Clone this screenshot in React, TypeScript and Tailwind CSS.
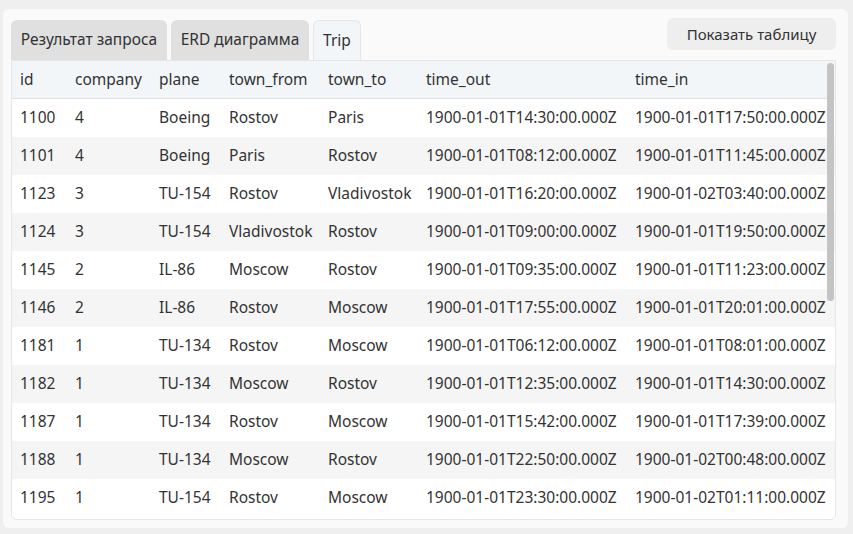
import React from "react";

const rows = [
  ["1100", "4", "Boeing", "Rostov", "Paris", "1900-01-01T14:30:00.000Z", "1900-01-01T17:50:00.000Z"],
  ["1101", "4", "Boeing", "Paris", "Rostov", "1900-01-01T08:12:00.000Z", "1900-01-01T11:45:00.000Z"],
  ["1123", "3", "TU-154", "Rostov", "Vladivostok", "1900-01-01T16:20:00.000Z", "1900-01-02T03:40:00.000Z"],
  ["1124", "3", "TU-154", "Vladivostok", "Rostov", "1900-01-01T09:00:00.000Z", "1900-01-01T19:50:00.000Z"],
  ["1145", "2", "IL-86", "Moscow", "Rostov", "1900-01-01T09:35:00.000Z", "1900-01-01T11:23:00.000Z"],
  ["1146", "2", "IL-86", "Rostov", "Moscow", "1900-01-01T17:55:00.000Z", "1900-01-01T20:01:00.000Z"],
  ["1181", "1", "TU-134", "Rostov", "Moscow", "1900-01-01T06:12:00.000Z", "1900-01-01T08:01:00.000Z"],
  ["1182", "1", "TU-134", "Moscow", "Rostov", "1900-01-01T12:35:00.000Z", "1900-01-01T14:30:00.000Z"],
  ["1187", "1", "TU-134", "Rostov", "Moscow", "1900-01-01T15:42:00.000Z", "1900-01-01T17:39:00.000Z"],
  ["1188", "1", "TU-134", "Moscow", "Rostov", "1900-01-01T22:50:00.000Z", "1900-01-02T00:48:00.000Z"],
  ["1195", "1", "TU-154", "Rostov", "Moscow", "1900-01-01T23:30:00.000Z", "1900-01-02T01:11:00.000Z"],
];

const headers = ["id", "company", "plane", "town_from", "town_to", "time_out", "time_in"];
const widths = ["w-[55px]", "w-[84px]", "w-[70px]", "w-[99px]", "w-[98px]", "w-[209px]", "flex-1"];

export default function App() {
  return (
    <div
      className="w-[853px] h-[534px] bg-[#efefef] pt-[9px] pl-[3px] overflow-hidden text-[#333333]"
      style={{ fontFamily: '"Noto Sans", sans-serif' }}
    >
      <div className="w-[845px] h-[519px] bg-[#fafafa] rounded-[6px] pl-[8px] pr-[12px] pt-[11px]">
        <div className="flex items-end justify-between">
          <div className="flex gap-[4px] items-end">
            <div className="h-[40px] w-[156px] flex items-center justify-center bg-[#e0e0e0] rounded-t-[6px] text-[15.5px] whitespace-nowrap">Результат запроса</div>
            <div className="h-[40px] w-[138px] flex items-center justify-center bg-[#e0e0e0] rounded-t-[6px] text-[15.5px] whitespace-nowrap">ERD диаграмма</div>
            <div className="h-[40px] w-[48px] flex items-center justify-center bg-[#f2f6f9] border border-b-0 border-[#e3e7ea] rounded-t-[6px] text-[15.5px]">Trip</div>
          </div>
          <div className="self-start -mt-[2px] h-[32px] w-[169px] flex items-center justify-center bg-[#eeeeee] rounded-[6px] text-[15px]">
            Показать таблицу
          </div>
        </div>
        <div className="relative h-[460px] border border-[#e6e6e6] rounded-b-[6px] overflow-hidden bg-white">
          <div className="flex h-[38px] items-center bg-[#f2f6f9] border-b border-[#dde1e4] text-[15.5px]">
            {headers.map((h, i) => (
              <div key={h} className={`${widths[i]} pl-[8px]`}>{h}</div>
            ))}
          </div>
          {rows.map((r, ri) => (
            <div
              key={r[0]}
              className={`flex h-[38px] items-center text-[15.5px] ${ri % 2 === 1 ? "bg-[#f5f5f5]" : "bg-white"}`}
            >
              {r.map((c, i) => (
                <div key={i} className={`${widths[i]} pl-[8px] whitespace-nowrap`}>{c}</div>
              ))}
            </div>
          ))}
          <div className="absolute right-[1px] top-[2px] w-[7px] h-[238px] rounded-full bg-[#c4c4c4]" />
        </div>
      </div>
    </div>
  );
}
